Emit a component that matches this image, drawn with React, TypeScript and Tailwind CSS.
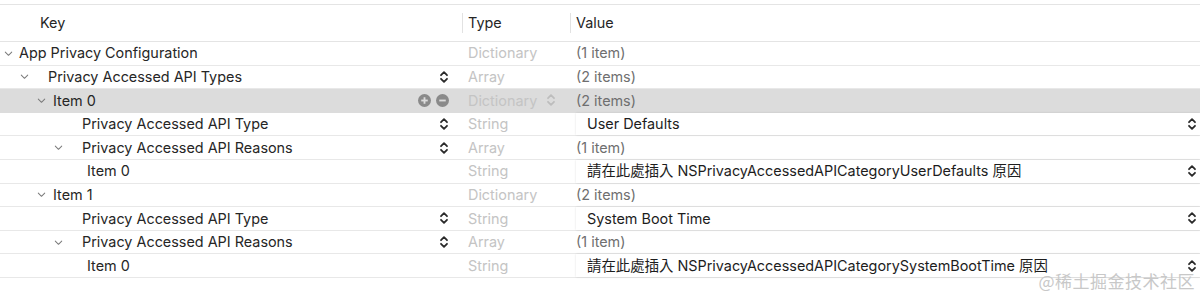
import React from 'react';

type Row = {
  key: string;
  level: number;
  open?: boolean;
  type: string;
  value: string;
  keyStepper?: boolean;
  valueField?: boolean;
  selected?: boolean;
};

const rows: Row[] = [
  { key: 'App Privacy Configuration', level: 0, open: true, type: 'Dictionary', value: '(1 item)' },
  { key: 'Privacy Accessed API Types', level: 1, open: true, type: 'Array', value: '(2 items)', keyStepper: true },
  { key: 'Item 0', level: 2, open: true, type: 'Dictionary', value: '(2 items)', selected: true },
  { key: 'Privacy Accessed API Type', level: 3, type: 'String', value: 'User Defaults', keyStepper: true, valueField: true },
  { key: 'Privacy Accessed API Reasons', level: 3, open: true, type: 'Array', value: '(1 item)', keyStepper: true },
  { key: 'Item 0', level: 4, type: 'String', value: '請在此處插入 NSPrivacyAccessedAPICategoryUserDefaults 原因', valueField: true },
  { key: 'Item 1', level: 2, open: true, type: 'Dictionary', value: '(2 items)' },
  { key: 'Privacy Accessed API Type', level: 3, type: 'String', value: 'System Boot Time', keyStepper: true, valueField: true },
  { key: 'Privacy Accessed API Reasons', level: 3, open: true, type: 'Array', value: '(1 item)', keyStepper: true },
  { key: 'Item 0', level: 4, type: 'String', value: '請在此處插入 NSPrivacyAccessedAPICategorySystemBootTime 原因', valueField: true },
];

// chevron x / text x for each depth
const chevronPad = ['pl-[3px]', 'pl-[19px]', 'pl-[36px]', 'pl-[53px]', 'pl-[53px]'];
const textPad = ['pl-[19px]', 'pl-[48px]', 'pl-[53px]', 'pl-[82px]', 'pl-[87px]'];

const Chevron = () => (
  <svg className="w-[11px] h-[11px]" viewBox="0 0 12 12" fill="none" stroke="#7a7a7a" strokeWidth={1.1}>
    <path d="M2.5 4.5 6 8l3.5-3.5" strokeLinecap="round" strokeLinejoin="round" />
  </svg>
);

const Stepper = ({ color = '#2a2a2a' }: { color?: string }) => (
  <svg className="w-[10px] h-[14px]" viewBox="0 0 10 14" fill="none" stroke={color} strokeWidth={1.8}>
    <path d="M2 5.2 5 2.2l3 3M2 8.8l3 3 3-3" strokeLinecap="round" strokeLinejoin="round" />
  </svg>
);

const CircleBtn = ({ plus }: { plus?: boolean }) => (
  <svg className="w-[13px] h-[13px]" viewBox="0 0 14 14">
    <circle cx="7" cy="7" r="7" fill="#8a8a8a" />
    <path d="M3.5 7h7" stroke="#dcdcdc" strokeWidth={2} />
    {plus && <path d="M7 3.5v7" stroke="#dcdcdc" strokeWidth={2} />}
  </svg>
);

export default function App() {
  return (
    <div className="w-[1200px] h-[296px] bg-white overflow-hidden relative font-['Inter','Noto_Sans_CJK_TC',sans-serif] text-[14.4px] text-[#262626]">
      <div className="mt-[4px] border-t border-[#e4e4e4]">
        {/* header */}
        <div className="flex h-[37px] items-center border-b border-[#e4e4e4]">
          <div className="w-[462px] pl-[40px]">Key</div>
          <div className="w-[108px] flex items-center">
            <div className="w-px h-[20px] bg-[#e2e2e2]" />
            <span className="pl-[5px]">Type</span>
          </div>
          <div className="flex-1 flex items-center">
            <div className="w-px h-[20px] bg-[#e2e2e2]" />
            <span className="pl-[5px]">Value</span>
          </div>
        </div>

        {rows.map((r, i) => (
          <div
            key={i}
            className={`flex h-[23.6px] items-center border-b ${r.selected ? 'bg-[#dcdcdc] border-[#dcdcdc]' : 'border-[#e8e8e8]'}`}
          >
            <div className="w-[462px] relative flex items-center h-full">
              {r.open && (
                <div className={`absolute left-0 top-0 h-full flex items-center ${chevronPad[r.level]}`}>
                  <Chevron />
                </div>
              )}
              <span className={`${textPad[r.level]} whitespace-nowrap`}>{r.key}</span>
              <div className="ml-auto pr-[13px] flex items-center gap-[5px]">
                {r.selected && (
                  <>
                    <CircleBtn plus />
                    <CircleBtn />
                  </>
                )}
                {r.keyStepper && <Stepper />}
              </div>
            </div>
            <div className="w-[108px] flex items-center pl-[6px] pr-[14px] text-[#c4c4c4]">
              <span>{r.type}</span>
              {r.selected && (
                <span className="ml-auto">
                  <Stepper color="#bdbdbd" />
                </span>
              )}
            </div>
            <div className="flex-1 h-full flex items-center">
              {r.valueField ? (
                <div className="flex-1 h-full flex items-center ml-[6px] pl-[11px] pr-[3px] bg-white shadow-[0_0_2px_rgba(0,0,0,0.12)]">
                  <span className="whitespace-nowrap text-[#1d1d1d]">{r.value}</span>
                  <span className="ml-auto">
                    <Stepper />
                  </span>
                </div>
              ) : (
                <span className="pl-[6px] text-[#6f6f6f]">{r.value}</span>
              )}
            </div>
          </div>
        ))}
      </div>
      <div className="absolute right-[5px] bottom-[3px] text-[17px] text-[#c8c8c8] font-['Noto_Sans_CJK_SC',sans-serif] tracking-[0.5px]">
        @稀土掘金技术社区
      </div>
    </div>
  );
}
